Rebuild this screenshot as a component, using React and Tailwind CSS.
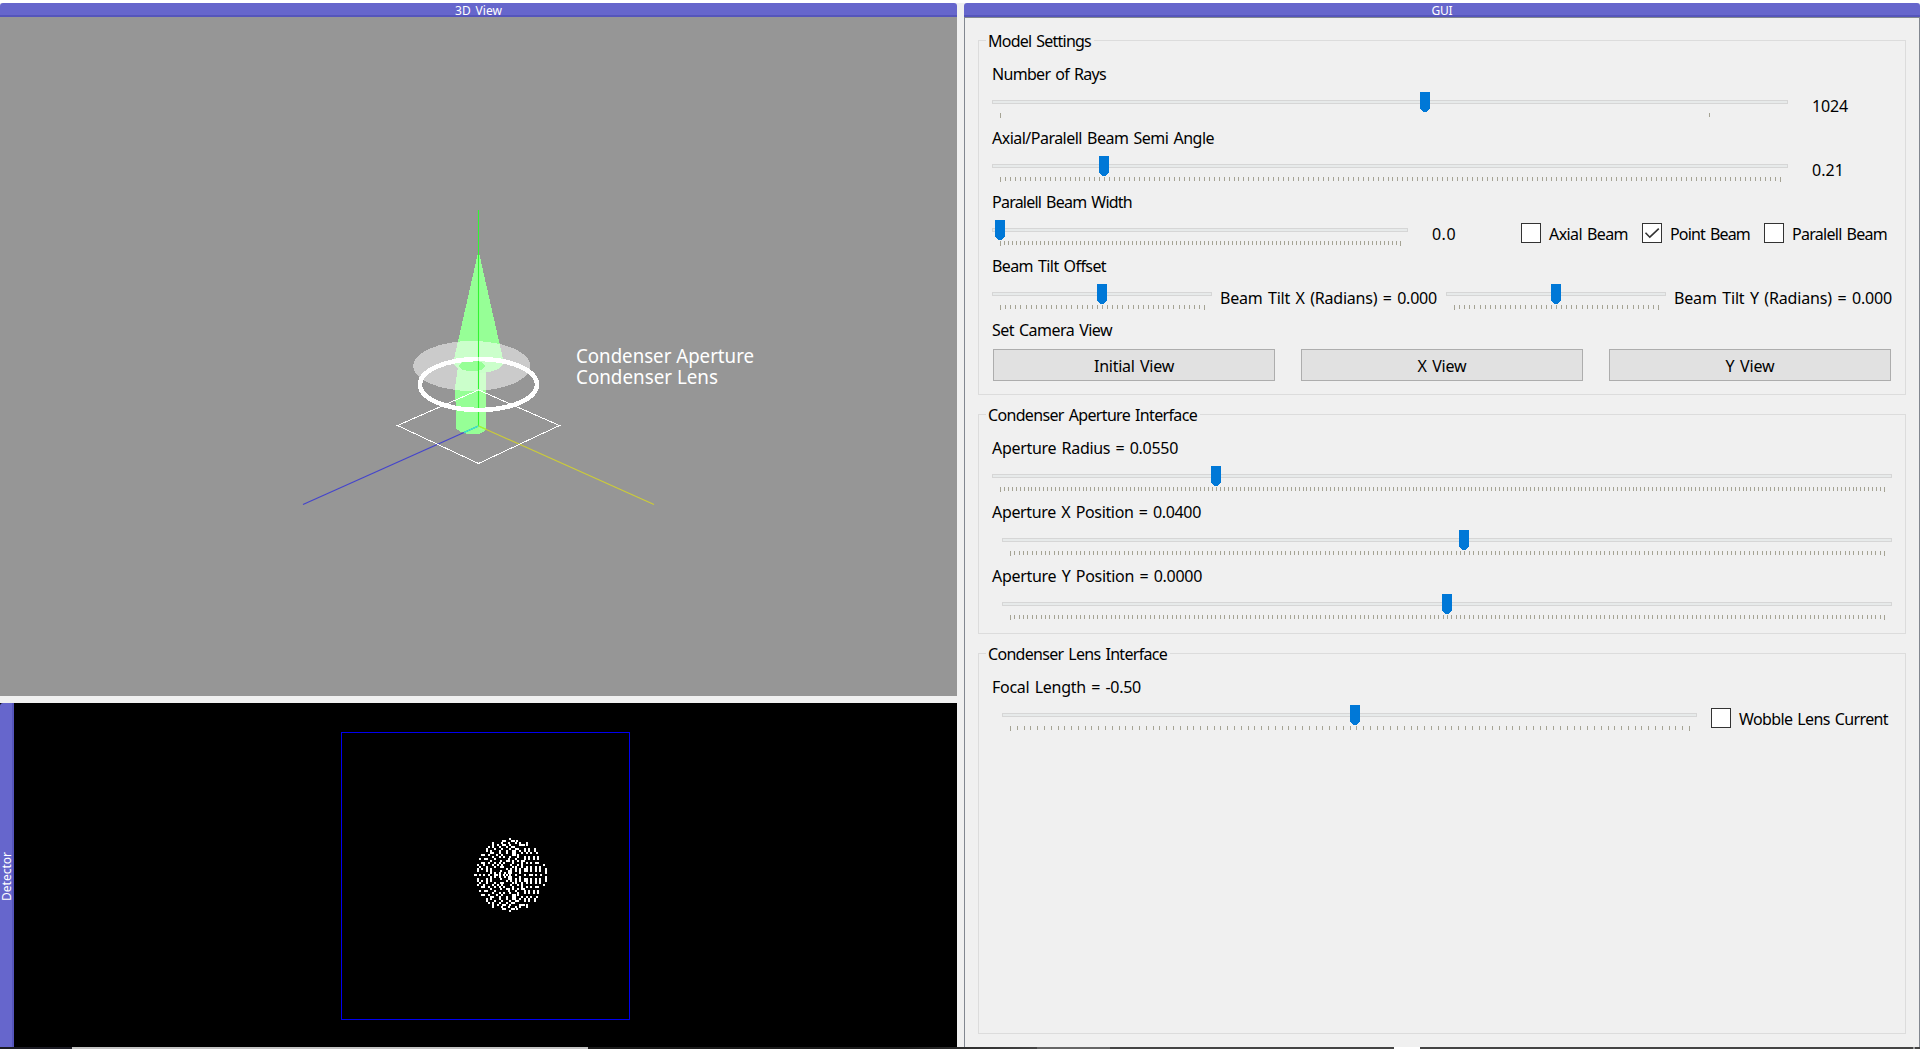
import React, { useLayoutEffect, useRef, useState } from "react";

/* Text set to a fixed advance width by adjusting its tracking. */
function Label({ children, w, className = "" }) {
  const ref = useRef(null);
  const [spacing, setSpacing] = useState(0);
  useLayoutEffect(() => {
    const natural = ref.current.getBoundingClientRect().width;
    setSpacing((w - natural) / String(children).length);
  }, []);
  return (
    <span className={"block shrink-0 whitespace-pre [word-spacing:1.5px] " + className} style={{ width: w }}>
      <span ref={ref} style={{ letterSpacing: spacing }}>
        {children}
      </span>
    </span>
  );
}

function VerticalLabel({ children }) {
  return (
    <span className="block self-start [writing-mode:vertical-rl] rotate-180 text-[12px] leading-[12px] text-white whitespace-nowrap">
      {children}
    </span>
  );
}

function Slider({ width, value, steps, ticks, className = "" }) {
  const span = width - 16;
  const marks =
    ticks || Array.from({ length: steps + 1 }, (_, i) => Math.round((i * span) / steps));
  return (
    <div className={"relative h-10 shrink-0 pt-[14px] " + className} style={{ width }}>
      <div className="h-1 border border-[#d6d6d6] bg-[#e7eaea]" />
      <svg className="mt-[9px] block" width={width} height="5" shapeRendering="crispEdges">
        {marks.map((m, i) => (
          <rect
            key={i}
            x={m + 8}
            y="0"
            width="1"
            height={m === 0 || m === span ? 5 : 4}
            fill="#a5a394"
          />
        ))}
      </svg>
      <svg
        className="absolute top-[6px]"
        style={{ left: 3 + Math.round(span * value) }}
        width="10"
        height="20"
        shapeRendering="crispEdges"
      >
        <path d="M0 0H10V17H9V18H8V19H7V20H3V19H2V18H1V17H0Z" fill="#0078d7" />
      </svg>
    </div>
  );
}

function Check({ label, w, checked, className = "" }) {
  return (
    <div className={"flex h-10 shrink-0 " + className}>
      <div className="mt-[9px] h-5 w-5 border border-[#333] bg-white">
        {checked && (
          <svg width="18" height="18" viewBox="0 0 18 18">
            <path d="M2.5 8.8 6.8 13.2 15.8 4.6" fill="none" stroke="#333" strokeWidth="1.6" />
          </svg>
        )}
      </div>
      <Label w={w} className="ml-2 leading-10">
        {label}
      </Label>
    </div>
  );
}

function Group({ title, titleWidth, className, children }) {
  return (
    <section className={"flex w-[928px] flex-col border border-[#dcdcdc] pl-[13px] " + className}>
      <h2 className="-ml-[6px] -mt-3 mb-[9px] self-start bg-[#f0f0f0] pl-[2px] pr-[3px] leading-6">
        <Label w={titleWidth}>{title}</Label>
      </h2>
      {children}
    </section>
  );
}

function Row({ label, w, children }) {
  return (
    <div className="h-16">
      <Label w={w} className="leading-6">
        {label}
      </Label>
      <div className="flex">{children}</div>
    </div>
  );
}

function ViewButton({ label, w }) {
  return (
    <button className="flex h-8 w-[282px] items-center justify-center border border-[#adadad] bg-[#e1e1e1] pt-0.5">
      <Label w={w}>{label}</Label>
    </button>
  );
}

function Scene() {
  return (
    <svg className="block h-full w-full" viewBox="0 17 957 679">
      <g shapeRendering="crispEdges">
        <path d="M477.5 255H479.5L503.7 362A25 11 0 0 1 453.3 362Z" fill="#96ff96" />
        <path d="M458 366 455 388 456.500 429Q462 434 473 434.500Q484 434 486 429V366Z" fill="#96ff96" />
        <path d="M479 373H485.500V430H479Z" fill="#a0ff9a" />
        <path
          d="M413.300 366A58.500 25 0 1 0 530.300 366A58.500 25 0 1 0 413.300 366ZM459 366A13 5.300 0 1 1 485 366A13 5.300 0 1 1 459 366Z"
          fillRule="evenodd"
          fill="#fff"
          fillOpacity="0.5"
        />
      </g>
      <path d="M478.500 210V426" stroke="#32f532" strokeWidth="1.100" />
      <g fill="none" strokeWidth="1.2">
        <path d="M478.500 426 303 504.500" stroke="#4444cc" />
        <path d="M478.500 426 464 432.500" stroke="#32ffcb" />
        <path d="M478.500 426 654 504.500" stroke="#cccc38" />
        <path d="M478.500 426 486 429.300" stroke="#98ff32" />
      </g>
      <g fill="none" stroke="#fff" shapeRendering="crispEdges">
        <path d="M478.500 390 559.500 425.500 478.500 463.500 397.500 425.500Z" />
        <ellipse cx="478.500" cy="384.500" rx="58.500" ry="25.500" strokeWidth="4.600" />
      </g>
      <path d="M478.500 357V408" stroke="#32f532" strokeWidth="1.100" opacity="0.35" />
      <g fill="#fff" fontFamily="'Noto Sans', sans-serif" fontSize="19">
        <text x="576" y="362.500" textLength="178" lengthAdjust="spacingAndGlyphs">Condenser Aperture</text>
        <text x="576" y="383.500" textLength="142" lengthAdjust="spacingAndGlyphs">Condenser Lens</text>
      </g>
    </svg>
  );
}

/* Ray hits on the detector: horizontal offsets for each row of the upper half, mirrored below. */
const HITS = [
  [35],
  [28, 30, 37, 39, 42],
  [18, 27, 34, 41, 45, 52],
  [18, 23, 28, 30, 35, 45, 47, 49, 52],
  [14, 18, 25, 32, 37, 39],
  [12, 20, 27, 35, 41, 43, 50, 54, 60],
  [12, 16, 25, 32, 38, 40, 45, 50, 54, 60],
  [16, 18, 25, 32, 38, 40, 47, 52, 56, 62],
  [7, 9, 14, 22, 27, 38, 40, 43],
  [18, 25, 29, 35, 43, 50, 54, 59, 63],
  [5, 10, 12, 20, 34, 41, 50, 54, 59, 63],
  [16, 26, 32, 34, 38, 43, 47, 49],
  [7, 9, 14, 20, 25, 29, 38, 47, 52, 56, 61, 63],
  [3, 9, 18, 23, 27, 36, 43, 47, 69],
  [5, 12, 20, 26, 28, 38, 41, 47, 52, 56, 61, 65],
  [3, 7, 12, 16, 32, 36, 41, 45, 50, 52, 56, 61, 65, 71],
  [3, 12, 16, 26, 34, 36, 41, 45, 50, 52, 56, 61, 65, 71],
  [16, 20, 25, 30, 34, 36, 45, 71],
  [0, 1, 5, 9, 14, 20, 22, 25, 29, 32, 35, 41, 50, 55, 57, 61, 66],
];

function Detector() {
  return (
    <svg className="block" width="943" height="344" viewBox="14 703 943 344" shapeRendering="crispEdges">
      <rect x="341.500" y="732.500" width="288" height="287" fill="none" stroke="#0000f0" />
      <g fill="#fff">
        {HITS.map((cols, r) =>
          cols.map((c) => (
            <React.Fragment key={c}>
              <rect x={474 + c} y={838 + r * 2} width="2" height="2" />
              {r < 18 && <rect x={474 + c} y={910 - r * 2} width="2" height="2" />}
            </React.Fragment>
          ))
        )}
      </g>
    </svg>
  );
}

function TitleBar({ children, w }) {
  return (
    <div className="flex h-[14px] justify-center rounded-t-[3px] border-b-2 border-[#5555bb] bg-[#6666cc] text-[12px] leading-[15px] text-white">
      <Label w={w}>{children}</Label>
    </div>
  );
}

export default function App() {
  return (
    <div className="flex h-[1049px] w-[1920px] flex-col overflow-hidden bg-[#f0f0f0] font-['Noto_Sans',sans-serif] text-[16px] text-black">
      <div className="h-[3px] shrink-0 bg-white" />
      <main className="flex h-[1044px] gap-[7px]">
        <div className="flex w-[957px] flex-col">
          <TitleBar w={47}>3D View</TitleBar>
          <div className="h-[679px] bg-[#969696]">
            <Scene />
          </div>
          <div className="mt-[7px] flex h-[344px] bg-black">
            <div className="flex w-[14px] justify-center rounded-tl-[3px] border-r-2 border-[#5555bb] bg-[#6666cc] pl-[2px] pt-[149px]">
              <VerticalLabel>Detector</VerticalLabel>
            </div>
            <Detector />
          </div>
        </div>

        <div className="flex w-[956px] flex-col">
          <TitleBar w={21}>GUI</TitleBar>
          <div className="flex flex-1 flex-col gap-[19px] border border-b-0 border-[#828790] pl-[13px] pt-[22px]">
            <Group title="Model Settings" titleWidth={103} className="h-[355px]">
              <Row label="Number of Rays" w={114}>
                <Slider width={796} value={0.545} ticks={[0, 709]} />
                <Label w={36} className="ml-6 leading-10">1024</Label>
              </Row>
              <Row label="Axial/Paralell Beam Semi Angle" w={222}>
                <Slider width={796} value={0.1335} steps={157} />
                <Label w={32} className="ml-6 leading-10">0.21</Label>
              </Row>
              <Row label="Paralell Beam Width" w={140}>
                <Slider width={416} value={0} steps={100} />
                <Label w={24} className="ml-6 leading-10">0.0</Label>
                <Check label="Axial Beam" w={79} className="ml-[65px]" />
                <Check label="Point Beam" w={80} checked className="ml-[14px]" />
                <Check label="Paralell Beam" w={95} className="ml-[14px]" />
              </Row>
              <Row label="Beam Tilt Offset" w={114}>
                <Slider width={220} value={0.5} steps={40} />
                <Label w={217} className="ml-2 leading-10">Beam Tilt X (Radians) = 0.000</Label>
                <Slider width={220} value={0.5} steps={40} className="ml-[9px]" />
                <Label w={218} className="ml-2 leading-10">Beam Tilt Y (Radians) = 0.000</Label>
              </Row>
              <Label w={120} className="leading-6">Set Camera View</Label>
              <div className="ml-px mt-[7px] flex gap-[26px]">
                <ViewButton label="Initial View" w={80} />
                <ViewButton label="X View" w={49} />
                <ViewButton label="Y View" w={49} />
              </div>
            </Group>

            <Group title="Condenser Aperture Interface" titleWidth={209} className="h-[220px]">
              <Row label="Aperture Radius = 0.0550" w={186}>
                <Slider width={900} value={0.2444} steps={225} />
              </Row>
              <Row label="Aperture X Position = 0.0400" w={209}>
                <Slider width={890} value={0.52} steps={200} className="ml-[10px]" />
              </Row>
              <Row label="Aperture Y Position = 0.0000" w={210}>
                <Slider width={890} value={0.5} steps={200} className="ml-[10px]" />
              </Row>
            </Group>

            <Group title="Condenser Lens Interface" titleWidth={179} className="h-[381px]">
              <Row label="Focal Length = -0.50" w={149}>
                <Slider width={695} value={0.508} steps={100} className="ml-[10px]" />
                <Check label="Wobble Lens Current" w={149} className="ml-[14px]" />
              </Row>
            </Group>
          </div>
        </div>
      </main>
      <footer className="flex h-[2px] shrink-0 bg-[#444]">
        <div className="w-[72px] bg-[#1c1c24]" />
        <div className="w-[516px] bg-[#c4c4c4]" />
        <div className="w-[449px] bg-gradient-to-r from-[#1c1c1c] from-70% to-[#444]" />
        <div className="w-[73px] bg-[#666]" />
        <div className="w-[284px]" />
        <div className="w-[26px] bg-white" />
        <div className="w-[493px]" />
        <div className="w-[2px] bg-[#999]" />
      </footer>
    </div>
  );
}
